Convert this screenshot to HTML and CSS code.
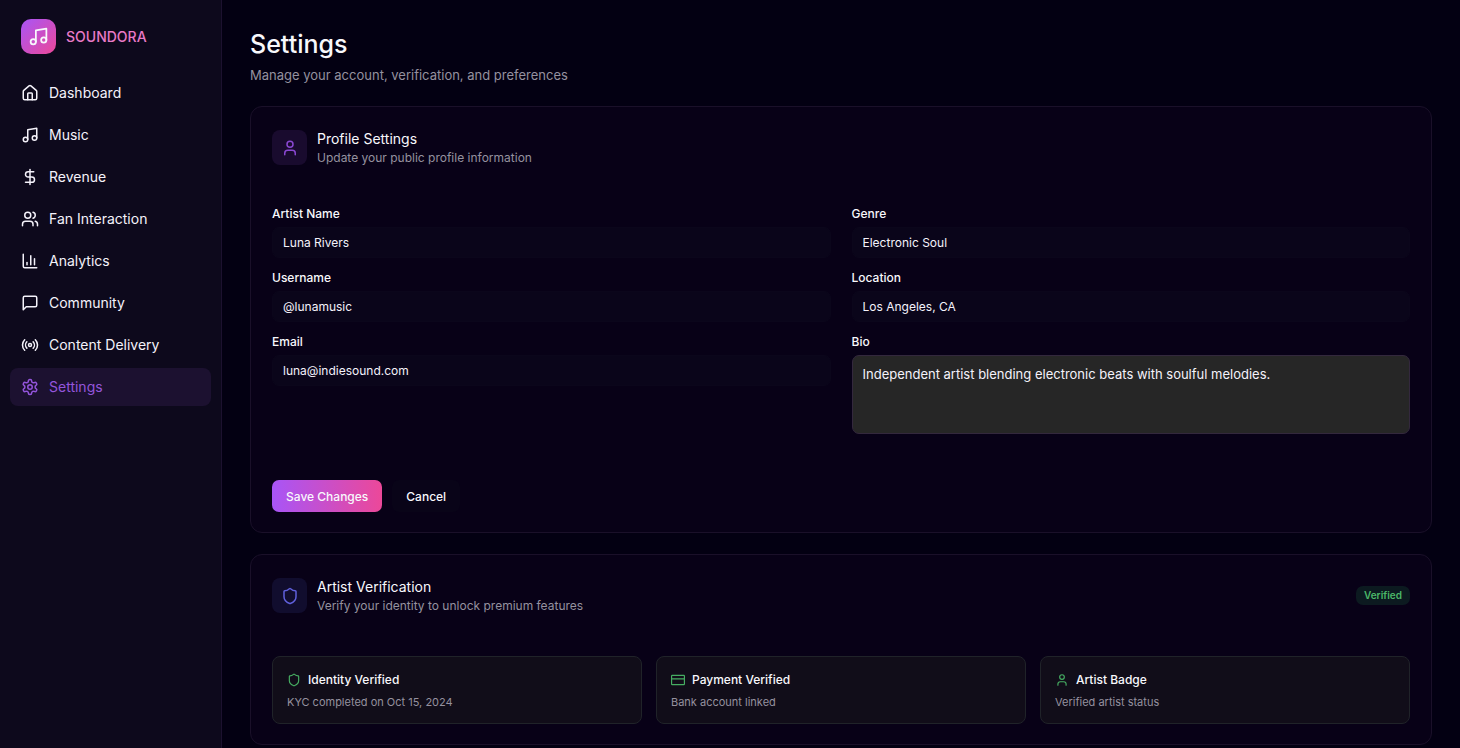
FILE: index.html
```html
<!DOCTYPE html>
<html lang="en">
<head>
  <meta charset="UTF-8">
  <meta name="viewport" content="width=device-width, initial-scale=1.0">
  <title>Soundora - Settings</title>
  <link rel="stylesheet" href="styles.css">
</head>
<body>

  <!-- Sidebar -->
  <aside class="sidebar">
    <div class="brand">
      <span class="brand-icon">
        <svg class="icon" viewBox="0 0 24 24"><path d="M9 18V5l12-2v13"/><circle cx="6" cy="18" r="3"/><circle cx="18" cy="16" r="3"/></svg>
      </span>
      <span class="brand-name">SOUNDORA</span>
    </div>

    <nav class="nav">
      <a href="#dashboard" class="nav-link">
        <svg class="icon" viewBox="0 0 24 24"><path d="M15 21v-8a1 1 0 0 0-1-1h-4a1 1 0 0 0-1 1v8"/><path d="M3 10a2 2 0 0 1 .709-1.528l7-5.999a2 2 0 0 1 2.582 0l7 5.999A2 2 0 0 1 21 10v9a2 2 0 0 1-2 2H5a2 2 0 0 1-2-2z"/></svg>
        Dashboard
      </a>
      <a href="#music" class="nav-link">
        <svg class="icon" viewBox="0 0 24 24"><path d="M9 18V5l12-2v13"/><circle cx="6" cy="18" r="3"/><circle cx="18" cy="16" r="3"/></svg>
        Music
      </a>
      <a href="#revenue" class="nav-link">
        <svg class="icon" viewBox="0 0 24 24"><path d="M12 2v20"/><path d="M17 5H9.500a3.500 3.500 0 0 0 0 7h5a3.500 3.500 0 0 1 0 7H6"/></svg>
        Revenue
      </a>
      <a href="#fans" class="nav-link">
        <svg class="icon" viewBox="0 0 24 24"><path d="M16 21v-2a4 4 0 0 0-4-4H6a4 4 0 0 0-4 4v2"/><circle cx="9" cy="7" r="4"/><path d="M22 21v-2a4 4 0 0 0-3-3.870"/><path d="M16 3.130a4 4 0 0 1 0 7.750"/></svg>
        Fan Interaction
      </a>
      <a href="#analytics" class="nav-link">
        <svg class="icon" viewBox="0 0 24 24"><path d="M3 3v16a2 2 0 0 0 2 2h16"/><path d="M18 17V9"/><path d="M13 17V5"/><path d="M8 17v-3"/></svg>
        Analytics
      </a>
      <a href="#community" class="nav-link">
        <svg class="icon" viewBox="0 0 24 24"><path d="M21 15a2 2 0 0 1-2 2H7l-4 4V5a2 2 0 0 1 2-2h14a2 2 0 0 1 2 2z"/></svg>
        Community
      </a>
      <a href="#delivery" class="nav-link">
        <svg class="icon" viewBox="0 0 24 24"><path d="M4.900 19.100C1 15.200 1 8.800 4.900 4.900"/><path d="M7.800 16.200c-2.300-2.300-2.300-6.100 0-8.500"/><circle cx="12" cy="12" r="2"/><path d="M16.200 7.800c2.300 2.300 2.300 6.100 0 8.500"/><path d="M19.100 4.900C23 8.800 23 15.100 19.100 19"/></svg>
        Content Delivery
      </a>
      <a href="#settings" class="nav-link active">
        <svg class="icon" viewBox="0 0 24 24"><path d="M12.220 2h-.44a2 2 0 0 0-2 2v.18a2 2 0 0 1-1 1.730l-.43.25a2 2 0 0 1-2 0l-.15-.08a2 2 0 0 0-2.730.73l-.22.38a2 2 0 0 0 .73 2.730l.15.1a2 2 0 0 1 1 1.720v.51a2 2 0 0 1-1 1.740l-.15.09a2 2 0 0 0-.73 2.730l.22.38a2 2 0 0 0 2.730.73l.15-.08a2 2 0 0 1 2 0l.43.25a2 2 0 0 1 1 1.730V20a2 2 0 0 0 2 2h.44a2 2 0 0 0 2-2v-.18a2 2 0 0 1 1-1.730l.43-.25a2 2 0 0 1 2 0l.15.08a2 2 0 0 0 2.730-.73l.22-.39a2 2 0 0 0-.73-2.730l-.15-.08a2 2 0 0 1-1-1.740v-.5a2 2 0 0 1 1-1.740l.15-.09a2 2 0 0 0 .73-2.730l-.22-.38a2 2 0 0 0-2.730-.73l-.15.08a2 2 0 0 1-2 0l-.43-.25a2 2 0 0 1-1-1.730V4a2 2 0 0 0-2-2z"/><circle cx="12" cy="12" r="3"/></svg>
        Settings
      </a>
    </nav>
  </aside>

  <!-- Main content -->
  <main class="content">
    <header class="page-header">
      <h1>Settings</h1>
      <p>Manage your account, verification, and preferences</p>
    </header>

    <!-- Profile -->
    <section class="card">
      <div class="card-header">
        <span class="card-icon purple">
          <svg class="icon" viewBox="0 0 24 24"><circle cx="12" cy="7" r="4"/><path d="M19 21v-2a4 4 0 0 0-4-4H9a4 4 0 0 0-4 4v2"/></svg>
        </span>
        <div class="card-title">
          <h2>Profile Settings</h2>
          <p>Update your public profile information</p>
        </div>
      </div>

      <form class="profile-form">
        <div class="form-grid">
          <div class="form-column">
            <div class="field">
              <label for="artistName">Artist Name</label>
              <input type="text" id="artistName" value="Luna Rivers">
            </div>
            <div class="field">
              <label for="username">Username</label>
              <input type="text" id="username" value="@lunamusic">
            </div>
            <div class="field">
              <label for="email">Email</label>
              <input type="email" id="email" value="luna@indiesound.com">
            </div>
          </div>
          <div class="form-column">
            <div class="field">
              <label for="genre">Genre</label>
              <input type="text" id="genre" value="Electronic Soul">
            </div>
            <div class="field">
              <label for="location">Location</label>
              <input type="text" id="location" value="Los Angeles, CA">
            </div>
            <div class="field">
              <label for="bio">Bio</label>
              <textarea id="bio">Independent artist blending electronic beats with soulful melodies.</textarea>
            </div>
          </div>
        </div>

        <div class="form-actions">
          <button type="button" class="button primary">Save Changes</button>
          <button type="button" class="button secondary">Cancel</button>
        </div>
      </form>
    </section>

    <!-- Verification -->
    <section class="card">
      <div class="card-header">
        <span class="card-icon indigo">
          <svg class="icon" viewBox="0 0 24 24"><path d="M20 13c0 5-3.500 7.500-7.660 8.950a1 1 0 0 1-.67-.01C7.500 20.500 4 18 4 13V6a1 1 0 0 1 1-1c2 0 4.500-1.200 6.240-2.720a1.170 1.170 0 0 1 1.520 0C14.510 3.810 17 5 19 5a1 1 0 0 1 1 1z"/></svg>
        </span>
        <div class="card-title">
          <h2>Artist Verification</h2>
          <p>Verify your identity to unlock premium features</p>
        </div>
        <span class="badge">Verified</span>
      </div>

      <div class="status-grid">
        <div class="status">
          <h3>
            <svg class="icon" viewBox="0 0 24 24"><path d="M20 13c0 5-3.500 7.500-7.660 8.950a1 1 0 0 1-.67-.01C7.500 20.500 4 18 4 13V6a1 1 0 0 1 1-1c2 0 4.500-1.200 6.240-2.720a1.170 1.170 0 0 1 1.520 0C14.510 3.810 17 5 19 5a1 1 0 0 1 1 1z"/></svg>
            Identity Verified
          </h3>
          <p>KYC completed on Oct 15, 2024</p>
        </div>
        <div class="status">
          <h3>
            <svg class="icon" viewBox="0 0 24 24"><rect x="1" y="4" width="22" height="16" rx="1"/><path d="M1 10h22"/></svg>
            Payment Verified
          </h3>
          <p>Bank account linked</p>
        </div>
        <div class="status">
          <h3>
            <svg class="icon" viewBox="0 0 24 24"><circle cx="12" cy="7" r="4"/><path d="M19 21v-2a4 4 0 0 0-4-4H9a4 4 0 0 0-4 4v2"/></svg>
            Artist Badge
          </h3>
          <p>Verified artist status</p>
        </div>
      </div>
    </section>
  </main>

</body>
</html>
```
FILE: styles.css
```css
* {
  box-sizing: border-box;
}

body {
  margin: 0;
  display: flex;
  min-height: 100vh;
  font-family: Inter, "Liberation Sans", sans-serif;
  font-size: 14px;
  line-height: 20px;
  background-color: #030012;
  color: #f8f8fc;
}

h1, h2, h3, p {
  margin: 0;
  font-weight: 400;
}

.icon {
  width: 18px;
  height: 18px;
  flex-shrink: 0;
  fill: none;
  stroke: currentColor;
  stroke-width: 2;
  stroke-linecap: round;
  stroke-linejoin: round;
}

/* Sidebar */
.sidebar {
  width: 222px;
  flex-shrink: 0;
  padding: 19px 10px;
  background-color: #0d091c;
  border-right: 1px solid #1c112f;
}

.brand {
  display: flex;
  align-items: center;
  gap: 10px;
  padding: 0 11px;
  margin-bottom: 20px;
}

.brand-icon {
  display: flex;
  align-items: center;
  justify-content: center;
  width: 35px;
  height: 35px;
  border-radius: 10px;
  background: linear-gradient(135deg, #a855f7, #ec4899);
}

.brand-icon .icon {
  width: 21px;
  height: 21px;
}

.brand-name {
  font-weight: 500;
  color: #e879c7;
}

.nav {
  display: flex;
  flex-direction: column;
  gap: 4px;
}

.nav-link {
  display: flex;
  align-items: center;
  gap: 10px;
  height: 38px;
  padding: 0 11px;
  border-radius: 8px;
  color: #f4f2fa;
  text-decoration: none;
}

.nav-link:hover {
  background-color: #151026;
}

.nav-link.active {
  background-color: #1c1130;
  color: #9455dc;
}

/* Main content */
.content {
  flex: 1;
  min-width: 0;
  padding: 28px;
}

.page-header {
  margin-bottom: 21px;
}

.page-header h1 {
  font-size: 25px;
  line-height: 32px;
  font-weight: 500;
}

.page-header p {
  margin-top: 5px;
  font-size: 13px;
  color: #95919f;
}

.card {
  padding: 22px 21px 20px;
  margin-bottom: 21px;
  background-color: #080117;
  border: 1px solid #1a1029;
  border-radius: 12px;
}

.card-header {
  display: flex;
  align-items: center;
  gap: 10px;
  margin-bottom: 42px;
}

.card-icon {
  display: flex;
  align-items: center;
  justify-content: center;
  width: 35px;
  height: 35px;
  border-radius: 8px;
}

.card-icon.purple {
  background-color: #190b2e;
  color: #8a48d2;
}

.card-icon.indigo {
  background-color: #110d2e;
  color: #6060dc;
}

.card-title {
  flex: 1;
}

.card-title h2 {
  font-size: 14px;
  line-height: 20px;
}

.card-title p {
  font-size: 12px;
  line-height: 17px;
  color: #95919f;
}

/* Profile form */
.form-grid {
  display: grid;
  grid-template-columns: 1fr 1fr;
  gap: 21px;
}

.form-column {
  display: flex;
  flex-direction: column;
  gap: 14px;
}

.field {
  display: flex;
  flex-direction: column;
  gap: 7px;
}

.field label {
  font-size: 12px;
  line-height: 12px;
  font-weight: 500;
}

.field input,
.field textarea {
  width: 100%;
  padding: 0 10px;
  font-family: inherit;
  font-size: 12px;
  color: #f4f2fa;
  background-color: #0a051a;
  border: 1px solid #0b061b;
  border-radius: 7px;
  outline: none;
}

.field input {
  height: 31px;
}

.field textarea {
  height: 79px;
  padding: 8px 10px;
  font-size: 13px;
  line-height: 20px;
  background-color: #262626;
  border-color: #33283d;
  resize: none;
}

.field input:focus,
.field textarea:focus {
  border-color: #a855f7;
}

.form-actions {
  display: flex;
  gap: 10px;
  margin-top: 46px;
}

.button {
  height: 32px;
  padding: 0 14px;
  font-family: inherit;
  font-size: 12px;
  font-weight: 500;
  color: #f8f8fc;
  border: none;
  border-radius: 7px;
  cursor: pointer;
}

.button.primary {
  background: linear-gradient(90deg, #a855f7, #ec4899);
}

.button.secondary {
  background-color: #090418;
}

/* Verification */
.badge {
  padding: 2px 8px;
  font-size: 10px;
  line-height: 15px;
  font-weight: 600;
  color: #4bb768;
  background-color: #0c1a20;
  border-radius: 7px;
}

.status-grid {
  display: grid;
  grid-template-columns: repeat(3, 1fr);
  gap: 14px;
}

.status {
  padding: 14px;
  background-color: #110d19;
  border: 1px solid #202329;
  border-radius: 8px;
}

.status h3 {
  display: flex;
  align-items: center;
  gap: 7px;
  margin-bottom: 7px;
  font-size: 12px;
  line-height: 17px;
  font-weight: 500;
}

.status .icon {
  width: 14px;
  height: 14px;
  color: #46ad62;
}

.status p {
  font-size: 11px;
  line-height: 14px;
  color: #95919f;
}
```
